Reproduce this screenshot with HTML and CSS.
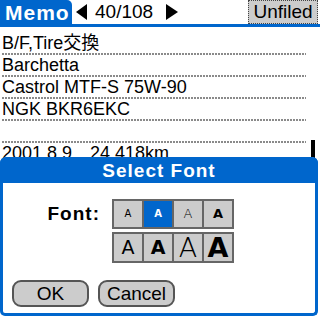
FILE: index.html
```html
<!DOCTYPE html>
<html lang="ja">
<head>
    <meta charset="UTF-8">
    <title>Memo</title>
    <link rel="stylesheet" href="styles.css">
</head>
<body>
    <div class="screen">
        <div class="titlebar">
            <div class="tab">Memo</div>
            <svg class="arrow" width="12" height="16" viewBox="0 0 12 16"><polygon points="11,0 11,16 0,8" fill="#000"/></svg>
            <span class="count">40/108</span>
            <svg class="arrow" width="12" height="16" viewBox="0 0 12 16"><polygon points="0,0 0,16 12,8" fill="#000"/></svg>
            <div class="category">Unfiled</div>
        </div>
        <div class="memo">
            <div class="lines">
                <p>B/F,Tire交換</p>
                <p>Barchetta</p>
                <p>Castrol MTF-S 75W-90</p>
                <p>NGK BKR6EKC</p>
                <p></p>
                <p>2001.8.9　24,418km</p>
                <p></p>
                <p></p>
            </div>
            <div class="scroll"><div class="thumb"></div></div>
        </div>

        <div class="dialog">
            <div class="dialog-title">Select Font</div>
            <div class="dialog-body">
                <div class="font-row">
                    <span class="label">Font:</span>
                    <div class="picker">
                        <div class="cells small">
                            <span class="f1">A</span>
                            <span class="f2 on">A</span>
                            <span class="f3">A</span>
                            <span class="f4">A</span>
                        </div>
                        <div class="cells large">
                            <span class="f5">A</span>
                            <span class="f6">A</span>
                            <span class="f7">A</span>
                            <span class="f8">A</span>
                        </div>
                    </div>
                </div>
                <div class="buttons">
                    <a href="javascript:;" class="btn">OK</a>
                    <a href="javascript:;" class="btn">Cancel</a>
                </div>
            </div>
        </div>
    </div>
</body>
</html>
```

FILE: styles.css
```css
*{
    padding: 0;
    margin: 0;
    box-sizing: border-box;
}
body{
    background: #fff;
    font-family: "Liberation Sans", "Noto Sans CJK JP", sans-serif;
    color: #000;
}
a{
    text-decoration: none;
    color: #000;
}
.screen{
    width: 320px;
    height: 320px;
    position: relative;
    overflow: hidden;
}
.titlebar{
    height: 27px;
    display: flex;
    align-items: flex-start;
    border-bottom: 3px solid #0066cc;
}
.tab{
    width: 72px;
    height: 24px;
    background: #0066cc;
    color: #fff;
    font-weight: bold;
    font-size: 21px;
    letter-spacing: 1px;
    line-height: 25px;
    padding-left: 5px;
    border-radius: 0 5px 0 0;
}
.arrow{
    margin-top: 4px;
    margin-left: 4px;
}
.count{
    font-size: 19px;
    line-height: 24px;
    margin-left: 7px;
    margin-right: 9px;
}
.category{
    margin-left: auto;
    margin-right: 2px;
    height: 24px;
    width: 70px;
    background: #cccccc;
    border: 1px dotted #444;
    font-size: 19px;
    line-height: 22px;
    text-align: center;
}
.memo{
    display: flex;
    padding-top: 6px;
}
.lines{
    width: 306px;
    padding-left: 2px;
}
.lines p{
    height: 22px;
    line-height: 21px;
    font-size: 18px;
    white-space: nowrap;
    background: linear-gradient(to right, #8a8a8a 2px, transparent 2px) left bottom / 3px 2px repeat-x;
}
.scroll{
    width: 14px;
    padding-left: 5px;
    padding-top: 107px;
}
.thumb{
    width: 4px;
    height: 40px;
    background: #000;
}

/* 对话框 */
.dialog{
    position: absolute;
    left: 0;
    top: 157px;
    width: 318px;
    height: 159px;
    border: 3px solid #0066cc;
    border-top: 0;
    border-radius: 6px 6px 5px 5px;
    background: #fff;
}
.dialog-title{
    height: 26px;
    margin: 0 -3px;
    background: #0066cc;
    border-radius: 6px 6px 0 0;
    color: #fff;
    font-weight: bold;
    font-size: 19px;
    letter-spacing: 1px;
    line-height: 27px;
    text-align: center;
}
.dialog-body{
    padding-top: 16px;
}
.font-row{
    display: flex;
    align-items: flex-start;
}
.label{
    width: 97px;
    text-align: right;
    font-weight: bold;
    font-size: 19px;
    letter-spacing: 1px;
    line-height: 30px;
}
.picker{
    margin-left: 12px;
}
.cells{
    display: grid;
    grid-template-columns: repeat(4, 28px);
    gap: 2px;
    padding: 2px;
    background: #666;
}
.cells span{
    background: #cccccc;
    text-align: center;
    font-family: "DejaVu Sans", sans-serif;
}
.small span{
    height: 26px;
    line-height: 26px;
}
.large{
    margin-top: 3px;
}
.large span{
    height: 27px;
    line-height: 27px;
}
.cells span.on{
    background: #0066cc;
    color: #fff;
}
.f1{ font-size: 10px; }
.f2{ font-size: 10px; font-weight: bold; }
.f3{ font-size: 13px; font-weight: 200; }
.f4{ font-size: 13px; font-weight: bold; }
.f5{ font-size: 19px; }
.f6{ font-size: 19px; font-weight: bold; }
.f7{ font-size: 27px; font-weight: 200; }
.f8{ font-size: 27px; font-weight: bold; }
.buttons{
    display: flex;
    gap: 9px;
    margin-top: 17px;
    padding-left: 9px;
}
.btn{
    width: 77px;
    height: 27px;
    border: 2px solid #555;
    border-radius: 9px;
    background: #cccccc;
    font-size: 19px;
    line-height: 23px;
    text-align: center;
}
```
